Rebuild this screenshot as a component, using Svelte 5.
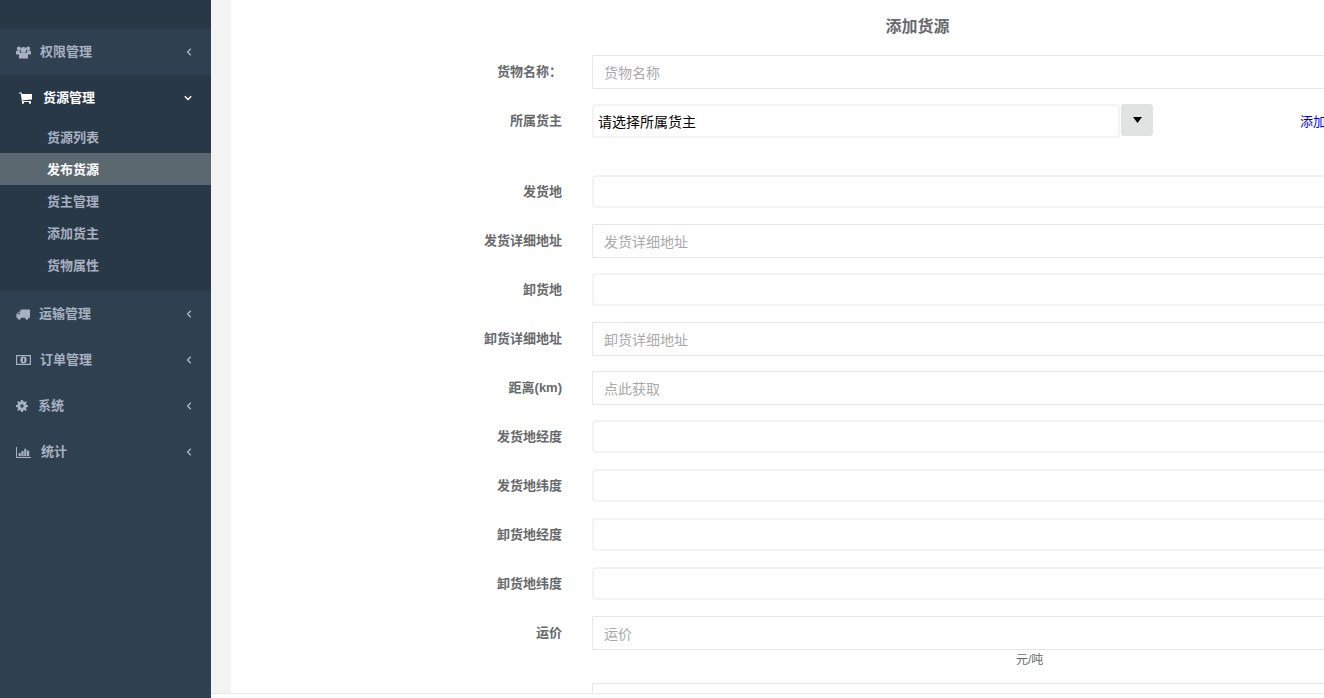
<script lang="ts">
	const fields = [
		{ label: '发货地', placeholder: '' },
		{ label: '发货详细地址', placeholder: '发货详细地址' },
		{ label: '卸货地', placeholder: '' },
		{ label: '卸货详细地址', placeholder: '卸货详细地址' },
		{ label: '距离(km)', placeholder: '点此获取' },
		{ label: '发货地经度', placeholder: '' },
		{ label: '发货地纬度', placeholder: '' },
		{ label: '卸货地经度', placeholder: '' },
		{ label: '卸货地纬度', placeholder: '' }
	];
	const subItems = ['货源列表', '发布货源', '货主管理', '添加货主', '货物属性'];
</script>

{#snippet chevronLeft()}
	<svg class="chev" width="6" height="8" viewBox="0 0 6 8"><path d="M4.8 0.8 L1.6 4 L4.8 7.2" fill="none" stroke="currentColor" stroke-width="1.4" /></svg>
{/snippet}

<div class="layout">
	<nav class="sidebar">
		<div class="nav-top"></div>
		<div class="nav-item first">
			<svg class="ico" width="15" height="13" viewBox="0 0 15 13" fill="currentColor"><circle cx="7.5" cy="3.8" r="2.9" /><circle cx="2.9" cy="2.4" r="2" /><circle cx="12.1" cy="2.4" r="2" /><path d="M3 12.6 V8.6 Q3 6.4 5.2 6.4 H9.8 Q12 6.4 12 8.6 V12.6 Z" /><path d="M0 8.4 V6 Q0 4.6 1.2 4.6 H4 V8.4 Z" /><path d="M15 8.4 V6 Q15 4.6 13.8 4.6 H11 V8.4 Z" /></svg>
			<span class="t">权限管理</span>
			{@render chevronLeft()}
		</div>
		<div class="group">
			<div class="nav-item open">
				<svg class="ico cart" width="13" height="12" viewBox="0 0 13 12" fill="currentColor"><path d="M0 0.5 H2.6 L3 2 H13 V7.4 L3.8 8.2 L4 9 H12 V10 H3 L1.8 1.6 H0 Z" /><circle cx="4" cy="10.8" r="1.1" /><circle cx="11" cy="10.8" r="1.1" /></svg>
				<span class="t">货源管理</span>
				<svg class="chev down" width="8" height="6" viewBox="0 0 8 6"><path d="M0.8 1.2 L4 4.4 L7.2 1.2" fill="none" stroke="currentColor" stroke-width="1.4" /></svg>
			</div>
			<ul>
				{#each subItems as item, i}
					<li class:active={i === 1}>{item}</li>
				{/each}
			</ul>
		</div>
		<div class="nav-item">
			<svg class="ico" width="14" height="11" viewBox="0 0 14 11" fill="currentColor"><path fill-rule="evenodd" d="M4.6 0.4 H13.4 Q14 0.4 14 1 V8.8 H0.4 V5.2 L3 2.6 H4.6 Z M3.2 3.6 L1.6 5.3 H3.8 V3.6 Z" /><circle cx="3.2" cy="9" r="1.7" /><circle cx="10.8" cy="9" r="1.7" /></svg>
			<span class="t">运输管理</span>
			{@render chevronLeft()}
		</div>
		<div class="nav-item">
			<svg class="ico" width="15" height="10" viewBox="0 0 15 10" fill="currentColor"><path fill-rule="evenodd" d="M0 0 H15 V10 H0 Z M1.2 1.2 V8.8 H13.8 V1.2 Z" /><ellipse cx="7.5" cy="5" rx="3.2" ry="3.4" /><rect x="7" y="3" width="1.2" height="4" fill="#2f4050" /></svg>
			<span class="t">订单管理</span>
			{@render chevronLeft()}
		</div>
		<div class="nav-item sys">
			<svg class="ico" width="12" height="12" viewBox="0 0 12 12" fill="currentColor"><path fill-rule="evenodd" d="M5 0 H7 L7.3 1.6 L8.6 2.1 L10 1.2 L10.9 2.4 L9.9 3.6 L10.4 5 L12 5.2 V6.9 L10.4 7.2 L9.9 8.5 L10.9 9.7 L9.7 10.9 L8.5 9.9 L7.2 10.4 L6.9 12 H5.1 L4.8 10.4 L3.5 9.9 L2.3 10.9 L1.1 9.7 L2.1 8.5 L1.6 7.2 L0 6.9 V5.1 L1.6 4.8 L2.1 3.5 L1.1 2.3 L2.3 1.1 L3.5 2.1 L4.8 1.6 Z M6 4.3 A1.7 1.7 0 1 0 6 7.7 A1.7 1.7 0 1 0 6 4.3 Z" /></svg>
			<span class="t">系统</span>
			{@render chevronLeft()}
		</div>
		<div class="nav-item stat">
			<svg class="ico" width="15" height="11" viewBox="0 0 15 11" fill="currentColor"><path d="M0 0 H1 V10 H15 V11 H0 Z" /><rect x="2.6" y="6" width="2.2" height="3.2" /><rect x="5.4" y="4" width="2.2" height="5.2" /><rect x="8.2" y="1.8" width="2.2" height="7.4" /><rect x="11" y="3.6" width="2.2" height="5.6" /></svg>
			<span class="t">统计</span>
			{@render chevronLeft()}
		</div>
	</nav>

	<div class="main">
		<div class="wrapper">
			<div class="panel">
				<h3>添加货源</h3>
				<form>
					<div class="row">
						<label for="goods">货物名称：</label>
						<input id="goods" placeholder="货物名称" />
					</div>
					<div class="row owner">
						<label for="owner">所属货主</label>
						<div id="owner" class="select">请选择所属货主</div>
						<button type="button" class="caret" aria-label="展开"><svg width="9" height="6" viewBox="0 0 9 6"><path d="M0 0 H9 L4.5 6 Z" /></svg></button>
						<a href="#add">添加货主</a>
					</div>
					{#each fields as f}
						<div class="row">
							<label for={f.label}>{f.label}</label>
							<input class:soft={f.placeholder === ''} id={f.label} placeholder={f.placeholder} />
						</div>
					{/each}
					<div class="row price">
						<label for="price">运价</label>
						<input id="price" placeholder="运价" />
					</div>
					<div class="unit">元/吨</div>
					<div class="row">
						<span class="gap"></span>
						<input />
					</div>
				</form>
			</div>
		</div>
		<div class="footer"></div>
	</div>
</div>

<style>
	:global(body) {
		overflow: hidden;
		background: #fff;
	}
	.layout {
		display: flex;
		height: 698px;
		overflow: hidden;
		font-family: 'Liberation Sans', 'Noto Sans CJK SC', sans-serif;
		font-size: 13px;
	}
	.sidebar {
		width: 211px;
		flex: none;
		background: #2f4050;
		color: #a7b1c2;
		font-weight: 700;
	}
	.nav-top {
		height: 29px;
		background: #293846;
	}
	.nav-item {
		height: 46px;
		display: flex;
		align-items: center;
		padding: 0 19px 0 16px;
		line-height: 1;
	}
	.nav-item .t {
		margin-left: 9px;
		margin-bottom: 1px;
		flex: 1;
	}
	.nav-item .ico {
		flex: none;
	}
	.nav-item.sys .t,
	.nav-item.stat .t {
		margin-left: 10px;
	}
	.group {
		background: #293846;
		padding-bottom: 10px;
	}
	.nav-item.open {
		color: #fff;
		padding-left: 19px;
	}
	.nav-item.open .t {
		margin-left: 11px;
	}
	.chev {
		flex: none;
	}
	ul {
		list-style: none;
		margin: 0;
		padding: 0;
	}
	li {
		box-sizing: border-box;
		height: 32px;
		line-height: 32px;
		padding: 1px 0 0 47px;
	}
	li.active {
		background: #5b686f;
		color: #fff;
	}
	.main {
		flex: 1;
		min-width: 0;
		display: flex;
		flex-direction: column;
	}
	.wrapper {
		flex: 1;
		min-height: 0;
		background: #f3f3f4;
		padding-left: 20px;
		overflow: hidden;
	}
	.panel {
		background: #fff;
		height: 100%;
		overflow: hidden;
		color: #676a6c;
	}
	.footer {
		height: 4px;
		flex: none;
		border-top: 1px solid #e7eaec;
		background: #fff;
	}
	h3 {
		margin: 0;
		box-sizing: border-box;
		width: 1373px;
		height: 38px;
		padding-top: 16px;
		line-height: 22px;
		font-size: 16px;
		font-weight: 700;
		text-align: center;
	}
	form {
		padding-top: 17px;
		width: 1161px;
	}
	.row {
		display: flex;
		align-items: flex-start;
		height: 34px;
		margin-bottom: 15px;
	}
	label,
	.gap {
		flex: none;
		width: 331px;
		margin-right: 30px;
	}
	label {
		text-align: right;
		font-weight: 700;
		line-height: 20px;
		padding-top: 7px;
	}
	input {
		box-sizing: border-box;
		flex: none;
		width: 800px;
		height: 34px;
		border: 1px solid #e5e6e7;
		border-radius: 1px;
		padding: 7px 11px 5px;
		font: inherit;
		font-size: 14px;
		background: #fff;
		outline: none;
	}
	input::placeholder {
		color: #a9a9a9;
		opacity: 1;
	}
	input.soft {
		border: 2px solid #f3f3f3;
		border-radius: 4px;
		height: 33px;
	}
	.owner {
		margin-bottom: 37px;
	}
	.select {
		box-sizing: border-box;
		flex: none;
		width: 528px;
		height: 34px;
		border: 2px solid #f3f3f3;
		border-radius: 4px;
		padding: 6px 4px;
		line-height: 20px;
		font-size: 14px;
		color: #000;
		white-space: nowrap;
	}
	.caret {
		flex: none;
		margin-left: 1px;
		width: 32px;
		height: 32px;
		padding: 0;
		border: none;
		border-radius: 3px;
		background: #e1e3e3;
		display: flex;
		align-items: center;
		justify-content: center;
	}
	.owner a {
		flex: none;
		margin-left: 147px;
		padding-top: 1px;
		color: #0000ee;
		font-size: 13px;
		line-height: 34px;
		white-space: nowrap;
		text-decoration: none;
	}
	.price {
		margin-bottom: 0;
	}
	.unit {
		box-sizing: border-box;
		height: 33px;
		padding: 1px 0 0 785px;
		font-size: 12px;
		line-height: 18px;
	}
</style>
